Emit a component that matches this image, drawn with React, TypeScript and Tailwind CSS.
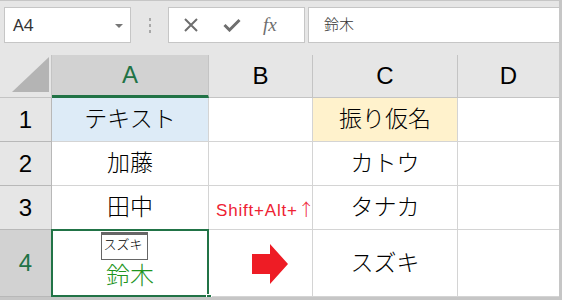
import React from "react";

const jp = { fontFamily: '"Liberation Sans", "Noto Sans CJK JP", sans-serif' };

function Toolbar() {
  return (
    <div className="flex h-[55px] items-start gap-0 border-t border-[#c6c6c6] bg-[#e6e6e6] pt-[6px] pl-[4px]">
      {/* Name box */}
      <div className="relative flex h-[36px] w-[127px] items-center border border-[#c6c6c6] bg-white pl-[8px] text-[17px] text-[#333]">
        A4
        <svg className="absolute right-[7px] top-[16px]" width="8" height="5" viewBox="0 0 8 5">
          <polygon points="0,0 8,0 4,4" fill="#777" />
        </svg>
      </div>
      {/* Dots */}
      <div className="flex w-[37px] flex-col items-center gap-[3px] pt-[11px]">
        <span className="h-[3px] w-[2px] bg-[#a8a8a8]" />
        <span className="h-[3px] w-[2px] bg-[#a8a8a8]" />
        <span className="h-[3px] w-[2px] bg-[#a8a8a8]" />
      </div>
      {/* Buttons */}
      <div className="flex h-[36px] w-[137px] items-center border border-[#c6c6c6] bg-white">
        <svg className="ml-[14px]" width="16" height="16" viewBox="0 0 16 16">
          <path d="M2 2 L14 14 M14 2 L2 14" stroke="#6e6e6e" strokeWidth="2" />
        </svg>
        <svg className="ml-[24px]" width="18" height="14" viewBox="0 0 18 14">
          <path d="M1.5 7 L6.5 12 L16.5 2" stroke="#6e6e6e" strokeWidth="3" fill="none" />
        </svg>
        <span
          className="ml-[22px] text-[19px] italic text-[#6e6e6e]"
          style={{ fontFamily: '"Liberation Serif", serif' }}
        >
          fx
        </span>
      </div>
      {/* Formula input */}
      <div
        className="ml-[3px] flex h-[36px] flex-1 items-center border border-r-0 border-[#c6c6c6] bg-white pl-[15px] text-[15px] font-light text-[#333]"
        style={jp}
      >
        鈴木
      </div>
    </div>
  );
}

function ColHeader({ label, w, active }: { label: string; w: string; active?: boolean }) {
  return (
    <div
      className={`${w} relative flex h-[43px] items-center justify-center border-r border-[#c4c4c4] text-[24px] ${
        active ? "border-b-[3px] border-b-[#217346] bg-[#d2d2d2] text-[#217346]" : "border-b border-b-[#c4c4c4] bg-[#e6e6e6] text-black"
      }`}
      style={{ fontFamily: '"Liberation Sans", sans-serif' }}
    >
      {label}
    </div>
  );
}

function RowHeader({ n, h, active }: { n: string; h: string; active?: boolean }) {
  return (
    <div
      className={`${h} flex w-[52px] items-center justify-center border-r border-b border-[#b8b8b8] text-[24px] ${
        active ? "bg-[#d2d2d2] text-[#217346]" : "bg-[#e6e6e6] text-black"
      }`}
      style={jp}
    >
      {n}
    </div>
  );
}

function Cell({
  w,
  children,
  className = "",
}: {
  w: string;
  children?: React.ReactNode;
  className?: string;
}) {
  return (
    <div
      className={`${w} flex items-center justify-center border-r border-b border-[#d4d4d4] text-[23px] font-light text-black ${className}`}
      style={jp}
    >
      {children}
    </div>
  );
}

export default function App() {
  return (
    <div className="h-[300px] w-[562px] overflow-hidden border-r-[3px] border-b-[3px] border-[#c6c6c6] bg-white">
      <Toolbar />

      {/* Column headers */}
      <div className="flex">
        <div className="flex h-[43px] w-[52px] items-end border-r border-b border-[#c4c4c4] bg-[#e6e6e6] pb-[5px] pl-[12px]">
          <svg width="37" height="35" viewBox="0 0 37 35">
            <polygon points="0,35 37,35 37,0" fill="#b4b4b4" />
          </svg>
        </div>
        <ColHeader label="A" w="w-[157px]" active />
        <ColHeader label="B" w="w-[104px]" />
        <ColHeader label="C" w="w-[145px]" />
        <ColHeader label="D" w="w-[101px] border-r-0" />
      </div>

      {/* Row 1 */}
      <div className="flex">
        <RowHeader n="1" h="h-[44px]" />
        <Cell w="w-[157px] h-[44px]" className="bg-[#ddebf7]">テキスト</Cell>
        <Cell w="w-[104px] h-[44px]" />
        <Cell w="w-[145px] h-[44px]" className="bg-[#fff2cc]">振り仮名</Cell>
        <Cell w="w-[101px] h-[44px] border-r-0" />
      </div>

      {/* Row 2 */}
      <div className="flex">
        <RowHeader n="2" h="h-[44px]" />
        <Cell w="w-[157px] h-[44px]">加藤</Cell>
        <Cell w="w-[104px] h-[44px]" />
        <Cell w="w-[145px] h-[44px]">カトウ</Cell>
        <Cell w="w-[101px] h-[44px] border-r-0" />
      </div>

      {/* Row 3 */}
      <div className="flex">
        <RowHeader n="3" h="h-[44px]" />
        <Cell w="w-[157px] h-[44px]">田中</Cell>
        <Cell w="w-[104px] h-[44px] relative z-10 !justify-start !items-end overflow-visible pb-[6px] pl-[7px]">
          <span className="whitespace-nowrap text-[17px] font-normal tracking-[0.8px] text-[#ee2233]">
            Shift+Alt+
            <span style={{ fontFamily: '"Noto Sans CJK JP", sans-serif' }} className="font-light">↑</span>
          </span>
        </Cell>
        <Cell w="w-[145px] h-[44px]">タナカ</Cell>
        <Cell w="w-[101px] h-[44px] border-r-0" />
      </div>

      {/* Row 4 */}
      <div className="flex">
        <RowHeader n="4" h="h-[67px]" active />
        <div className="relative flex h-[67px] w-[157px] flex-col items-center border-r border-b border-[#d4d4d4] pt-[2px] font-light" style={jp}>
          <div className="mr-[12px] flex h-[28px] w-[47px] items-start justify-start border border-t-[3px] border-[#666] border-t-double bg-white pl-[2px] pt-[3px] text-[13px] leading-none text-black">
            スズキ
          </div>
          <div className="mt-[1px] text-[24px] leading-[30px] text-[#1f951f]">鈴木</div>
          {/* selection border */}
          <div className="pointer-events-none absolute -top-[1px] -left-[1px] -right-[1px] -bottom-[1px] border-2 border-[#217346]" />
          <div className="absolute -right-[4px] -bottom-[4px] h-[6px] w-[6px] border border-white bg-[#217346]" />
        </div>
        <Cell w="w-[104px] h-[67px]">
          <svg width="36" height="40" viewBox="0 0 36 40" className="ml-[18px] mt-[2px]">
            <polygon points="0,10 18,10 18,0 36,20 18,40 18,30 0,30" fill="#ee1c25" />
          </svg>
        </Cell>
        <Cell w="w-[145px] h-[67px]">スズキ</Cell>
        <Cell w="w-[101px] h-[67px] border-r-0" />
      </div>
    </div>
  );
}
